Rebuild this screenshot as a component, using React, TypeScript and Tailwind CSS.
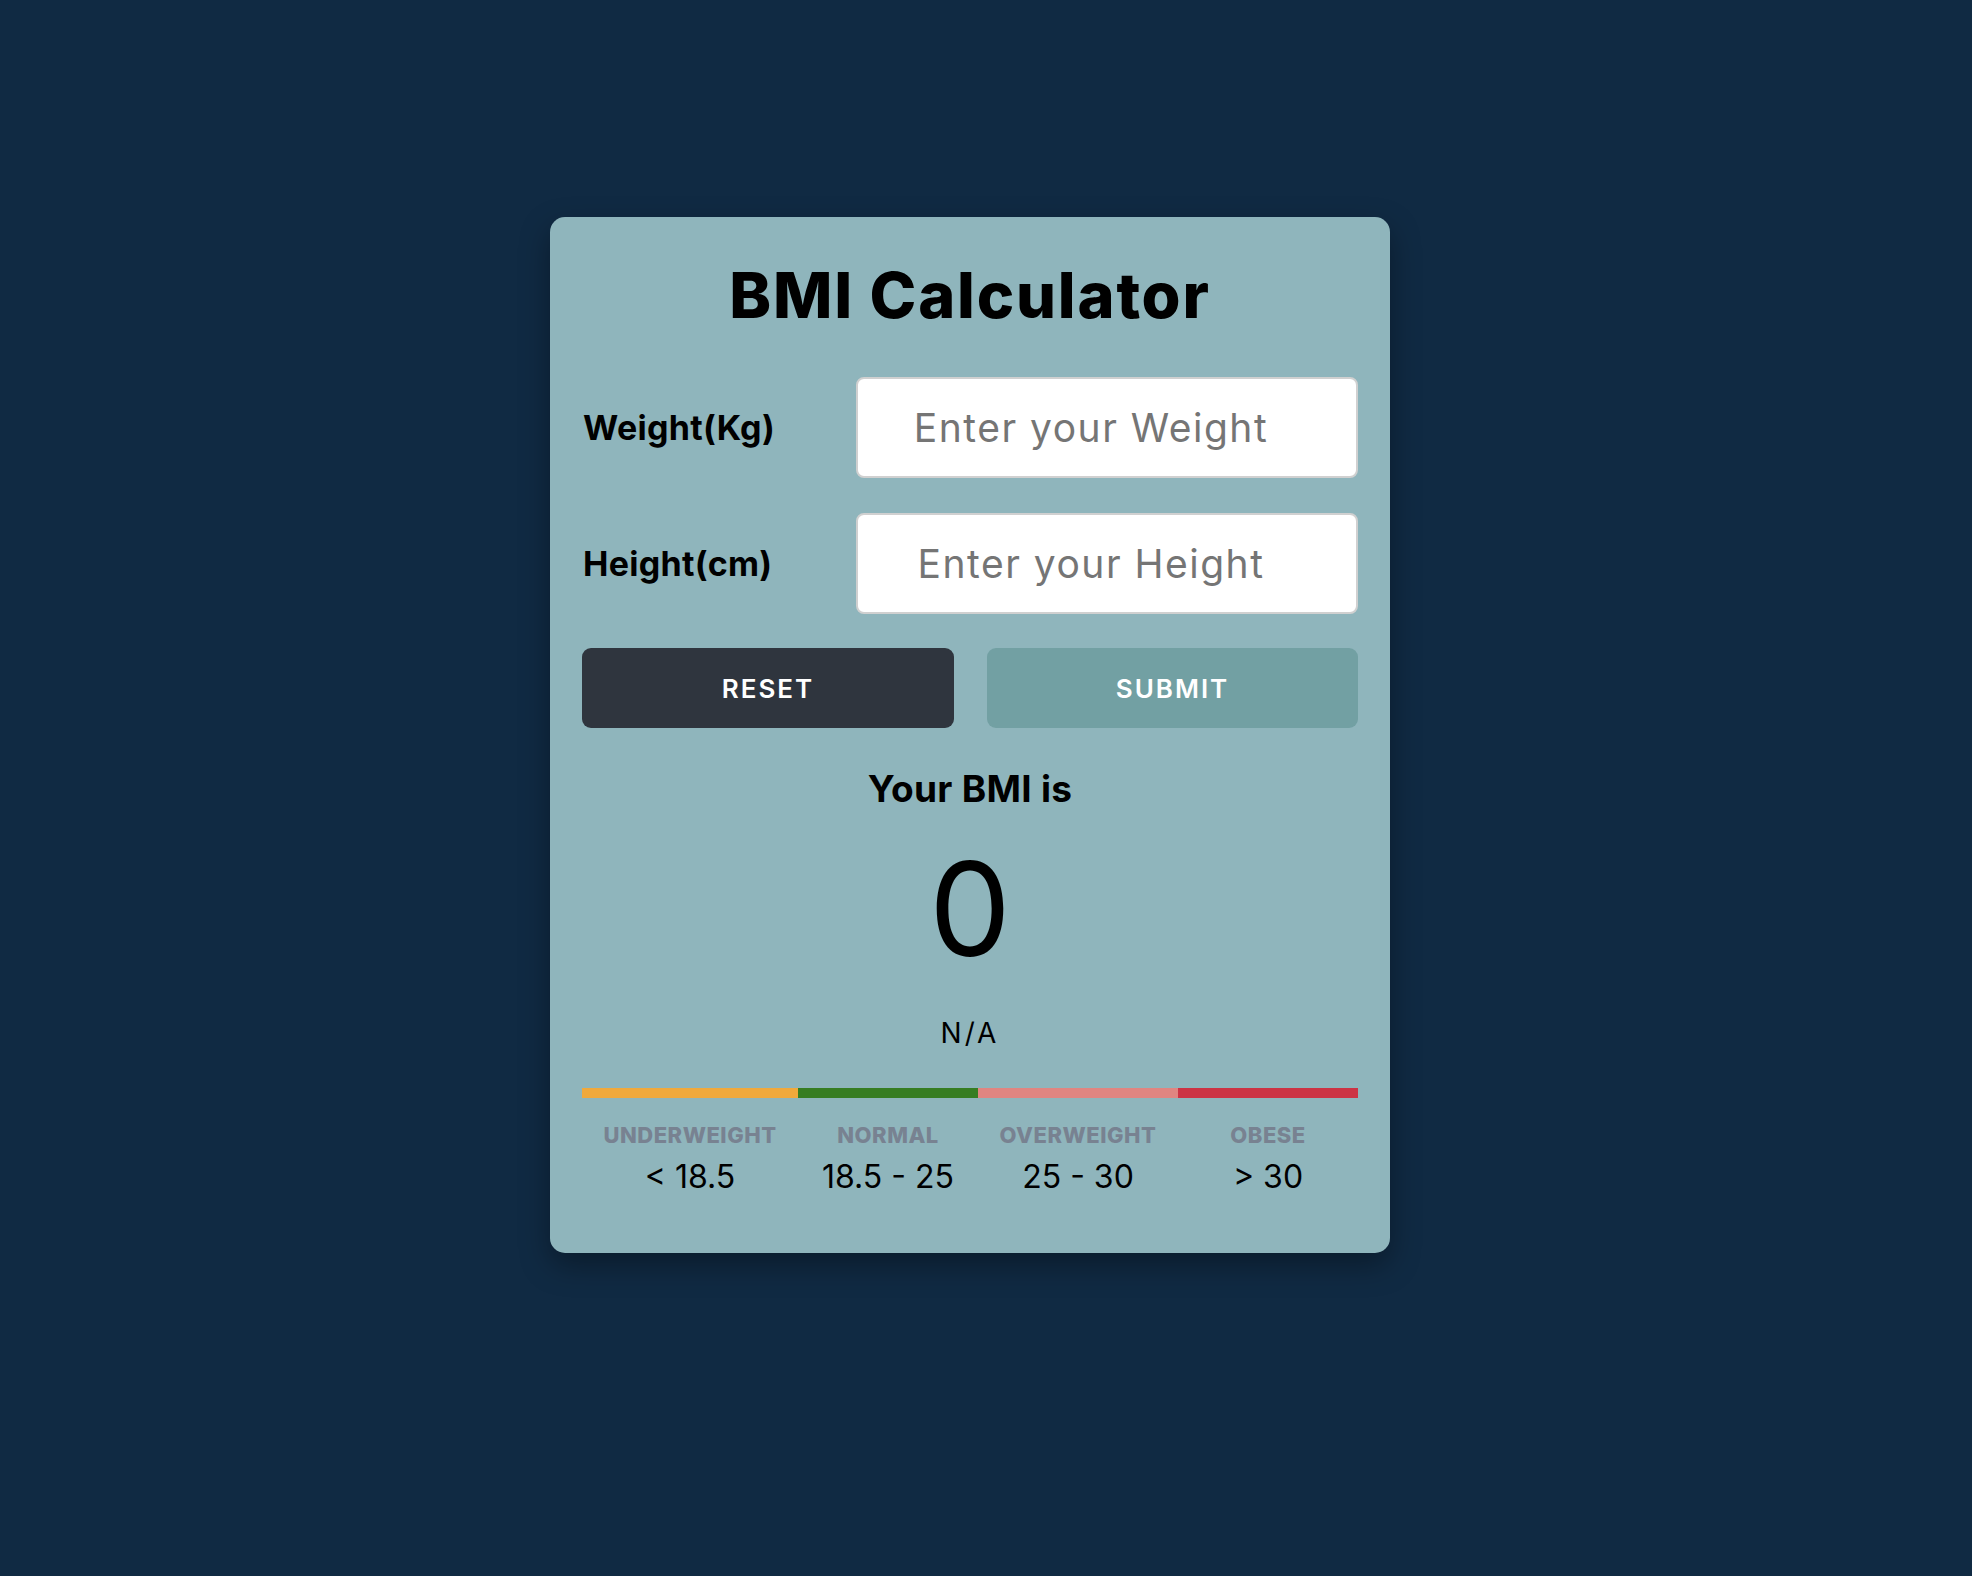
import React from "react";

const font = { fontFamily: "Inter, 'Liberation Sans', sans-serif" };

export default function App() {
  const cols = [
    { name: "UNDERWEIGHT", range: "< 18.5", color: "bg-[#f0a93c]", w: "w-[216px]" },
    { name: "NORMAL", range: "18.5 - 25", color: "bg-[#367d22]", w: "w-[180px]" },
    { name: "OVERWEIGHT", range: "25 - 30", color: "bg-[#e08581]", w: "w-[200px]" },
    { name: "OBESE", range: "> 30", color: "bg-[#cc3344]", w: "w-[180px]" },
  ];
  return (
    <div className="min-h-screen w-full bg-[#102a43] flex justify-center pt-[217px] pb-[200px] pr-[32px]" style={font}>
      <div className="w-[840px] h-[1036px] bg-[#8fb5bc] rounded-[15px] shadow-[0_12px_30px_rgba(0,0,0,0.35)] px-[32px] pt-[47px] flex flex-col">
        <h1 className="text-center text-[63px] leading-none font-extrabold text-black tracking-[1.8px]">
          BMI Calculator
        </h1>
        <div className="mt-[50px] flex items-center justify-between">
          <label className="text-[34px] leading-none font-bold text-black tracking-[0.3px] ml-[1px]">Weight(Kg)</label>
          <input
            placeholder="Enter your Weight"
            className="w-[502px] h-[101px] bg-white border-2 border-[#d0d0d0] rounded-[8px] text-center pr-[32px] text-[39px] tracking-[1.5px] placeholder:text-[#757575] outline-none"
          />
        </div>
        <div className="mt-[35px] flex items-center justify-between">
          <label className="text-[34px] leading-none font-bold text-black tracking-[0.3px] ml-[1px]">Height(cm)</label>
          <input
            placeholder="Enter your Height"
            className="w-[502px] h-[101px] bg-white border-2 border-[#d0d0d0] rounded-[8px] text-center pr-[32px] text-[39px] tracking-[1.5px] placeholder:text-[#757575] outline-none"
          />
        </div>
        <div className="mt-[34px] flex justify-between">
          <button className="w-[372px] h-[80px] rounded-[9px] bg-[#2f353e] text-white text-[26px] font-semibold tracking-[2px]">
            RESET
          </button>
          <button className="w-[371px] h-[80px] rounded-[9px] bg-[#72a0a3] text-white text-[26px] font-semibold tracking-[2px]">
            SUBMIT
          </button>
        </div>
        <div className="mt-[42px] text-center text-[37px] leading-none font-bold text-black tracking-[0.3px]">Your BMI is</div>
        <div className="mt-[37px] text-center text-[130px] leading-none font-normal text-black">0</div>
        <div className="mt-[45px] text-center text-[28px] leading-none font-normal text-black tracking-[3px]">N/A</div>
        <div className="mt-[41px] flex">
          {cols.map((c) => (
            <div key={c.name} className={`${c.w} h-[10px] ${c.color}`} />
          ))}
        </div>
        <div className="mt-[26px] flex">
          {cols.map((c) => (
            <div key={c.name} className={`${c.w} flex flex-col items-center`}>
              <div className="text-[22px] leading-none font-extrabold text-[#788291] tracking-[0.5px]">{c.name}</div>
              <div className="mt-[15px] text-[32px] leading-none font-normal text-black">{c.range}</div>
            </div>
          ))}
        </div>
      </div>
    </div>
  );
}
